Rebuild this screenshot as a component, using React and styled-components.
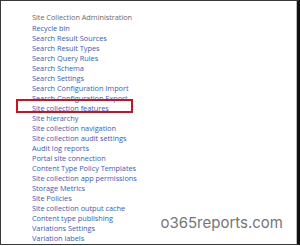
import React from "react";
import styled, { createGlobalStyle } from "styled-components";

const Global = createGlobalStyle`
  html, body { margin: 0; padding: 0; background: #fff; overflow: hidden; }
`;

const Frame = styled.div`
  position: relative;
  box-sizing: border-box;
  width: 300px;
  height: 245px;
  border-top: 1px solid #3a3a3a;
  border-left: 1px solid #3a3a3a;
  border-bottom: 1px solid #3a3a3a;
  border-right: 3px solid #111;
  box-shadow: inset -1px 0 0 #bbb;
  background: #fff;
  padding: 11px 0 0 31px;
  font-family: "Open Sans", "Noto Sans", sans-serif;
`;

const Title = styled.div`
  color: #6a6a6a;
  font-size: 7.4px;
  letter-spacing: -0.05px;
  line-height: 10px;
  height: 11px;
  white-space: nowrap;
`;

const List = styled.ul`
  list-style: none;
  margin: 0;
  padding: 0;
`;

const Item = styled.li`
  position: relative;
  color: #3b5cb8;
  font-size: 7.4px;
  letter-spacing: -0.05px;
  line-height: 10px;
  height: 10px;
  white-space: nowrap;
`;

const Highlight = styled.span`
  position: absolute;
  left: -16px;
  top: -4px;
  width: 113px;
  height: 10px;
  border: 2px solid #d0101e;
`;

const Watermark = styled.div`
  position: absolute;
  right: 14px;
  top: 214px;
  color: #767676;
  font-family: "Inter", "Roboto", sans-serif;
  font-size: 15px;
  line-height: 16px;
`;

const items = [
  "Recycle bin",
  "Search Result Sources",
  "Search Result Types",
  "Search Query Rules",
  "Search Schema",
  "Search Settings",
  "Search Configuration Import",
  "Search Configuration Export",
  "Site collection features",
  "Site hierarchy",
  "Site collection navigation",
  "Site collection audit settings",
  "Audit log reports",
  "Portal site connection",
  "Content Type Policy Templates",
  "Site collection app permissions",
  "Storage Metrics",
  "Site Policies",
  "Site collection output cache",
  "Content type publishing",
  "Variations Settings",
  "Variation labels",
  "Translatable columns",
];

export default function App() {
  return (
    <>
      <Global />
      <Frame>
        <Title>Site Collection Administration</Title>
        <List>
          {items.map((t) => (
            <Item key={t}>
              {t === "Site collection features" && <Highlight />}
              {t}
            </Item>
          ))}
        </List>
        <Watermark>o365reports.com</Watermark>
      </Frame>
    </>
  );
}
